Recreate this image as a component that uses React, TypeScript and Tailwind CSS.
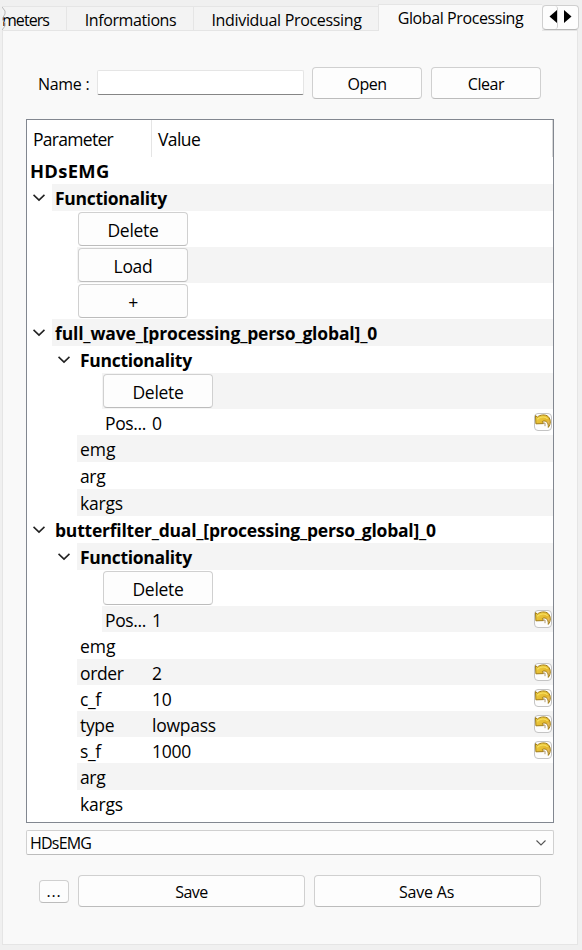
type RowData = {
  level: 0 | 1 | 2 | 3;
  label?: string;
  button?: string;
  value?: string;
  bold?: boolean;
  open?: boolean;
  shade?: boolean;
  undo?: boolean;
  h: string;
  track?: string;
};

const rows: RowData[] = [
  { level: 0, label: 'HDsEMG', bold: true, h: 'h-[27px]', track: 'tracking-[0.3px] text-[18.4px]' },
  { level: 1, label: 'Functionality', bold: true, open: true, shade: true, h: 'h-[27px]', track: 'tracking-[-0.3px]' },
  { level: 2, button: 'Delete', h: 'h-[36px]' },
  { level: 2, button: 'Load', shade: true, h: 'h-[36px]' },
  { level: 2, button: '+', h: 'h-[36px]' },
  { level: 1, label: 'full_wave_[processing_perso_global]_0', bold: true, open: true, shade: true, h: 'h-[27px]', track: 'tracking-[-0.15px]' },
  { level: 2, label: 'Functionality', bold: true, open: true, h: 'h-[27px]', track: 'tracking-[-0.3px]' },
  { level: 3, button: 'Delete', shade: true, h: 'h-[36px]' },
  { level: 3, label: 'Pos...', value: '0', undo: true, h: 'h-[26px]' },
  { level: 2, label: 'emg', shade: true, h: 'h-[27px]', track: 'tracking-[0px]' },
  { level: 2, label: 'arg', h: 'h-[27px]' },
  { level: 2, label: 'kargs', shade: true, h: 'h-[27px]', track: 'tracking-[-0.2px]' },
  { level: 1, label: 'butterfilter_dual_[processing_perso_global]_0', bold: true, open: true, h: 'h-[27px]', track: 'tracking-[-0.22px]' },
  { level: 2, label: 'Functionality', bold: true, open: true, shade: true, h: 'h-[27px]', track: 'tracking-[-0.3px]' },
  { level: 3, button: 'Delete', h: 'h-[36px]' },
  { level: 3, label: 'Pos...', value: '1', shade: true, undo: true, h: 'h-[26px]' },
  { level: 2, label: 'emg', h: 'h-[27px]', track: 'tracking-[0px]' },
  { level: 2, label: 'order', value: '2', shade: true, undo: true, h: 'h-[26px]' },
  { level: 2, label: 'c_f', value: '10', undo: true, h: 'h-[26px]' },
  { level: 2, label: 'type', value: 'lowpass', shade: true, undo: true, h: 'h-[26px]' },
  { level: 2, label: 's_f', value: '1000', undo: true, h: 'h-[26px]' },
  { level: 2, label: 'arg', shade: true, h: 'h-[27px]' },
  { level: 2, label: 'kargs', h: 'h-[27px]', track: 'tracking-[-0.2px]' },
];

const indent = { 0: 'w-0', 1: 'w-[25px]', 2: 'w-[50px]', 3: 'w-[75px]' };
const labelWidth = { 0: 'w-[122px]', 1: 'w-[97px]', 2: 'w-[72px]', 3: 'w-[47px]' };

function Chevron() {
  return (
    <svg className="mr-[7px] mt-px" width="12" height="8" viewBox="0 0 12 8" fill="none" stroke="#222" strokeWidth="1.7">
      <path d="M0.5 0.9L6 6L11.5 0.9" />
    </svg>
  );
}

function UndoButton() {
  return (
    <span className="mr-px -mt-px flex h-[18px] w-[18px] shrink-0 items-start justify-center rounded-[4px] border border-[#c4c4c4] bg-[#fdfdfd]">
      <svg width="16" height="16" viewBox="0 0 16 16">
        <defs>
          <linearGradient id="gold" x1="0" y1="0" x2="1" y2="1">
            <stop offset="0" stopColor="#f0d548" />
            <stop offset=".6" stopColor="#e3b52c" />
            <stop offset="1" stopColor="#f2c9a0" />
          </linearGradient>
        </defs>
        <path d="M0.5 1.6L2.4 3.1C5 0.6 10.5 0 13.2 2.6C16 5.4 16 10 13.3 13.4C13.4 10.6 12.9 8.6 11.2 7.6C10 6.8 8.6 6.8 7.4 7.5L8.6 9.6L0.9 9.8Z" fill="url(#gold)" stroke="#a17c14" strokeWidth="1" strokeLinejoin="round" />
        <path d="M2.2 5.2C5.4 2.6 10.4 2.2 12.6 4.8" fill="none" stroke="#f7e05f" strokeWidth="1.1" />
        <path d="M8 9.4L10 9L10 12.2" fill="none" stroke="#b09a74" strokeWidth="1" />
      </svg>
    </span>
  );
}

function Row({ r }: { r: RowData }) {
  return (
    <div className={`flex ${r.h}`}>
      <div className={`flex shrink-0 items-center justify-end ${indent[r.level]}`}>{r.open && <Chevron />}</div>
      <div className={`flex min-w-0 flex-1 items-center ${r.shade ? 'bg-[#f4f4f4]' : ''}`}>
        {r.button ? (
          <div className="ml-px flex h-[34px] w-[110px] items-center justify-center rounded-[4px] border border-[#d0d0d0] border-b-[#bcbcbc] bg-[#fdfdfd] pt-[3px] text-[17.5px] tracking-[-0.3px]">
            {r.button}
          </div>
        ) : (
          <div className={`shrink-0 whitespace-nowrap pl-[3px] pt-px leading-[24px] ${labelWidth[r.level]} ${r.level === 0 ? '' : 'text-[17.5px]'} ${r.bold ? 'font-bold' : ''} ${r.track ?? 'tracking-[-0.35px]'}`}>
            {r.label}
          </div>
        )}
        {r.value && <div className="flex-1 pl-[3px] pt-px text-[17.5px] leading-[24px] tracking-[-0.25px]">{r.value}</div>}
        {r.undo && <UndoButton />}
      </div>
    </div>
  );
}

const btn = 'flex items-center justify-center rounded-[4px] border border-[#d0d0d0] border-b-[#bcbcbc] bg-[#fdfdfd] text-[16px]';

export default function App() {
  return (
    <div className="flex h-[950px] w-[582px] flex-col overflow-hidden bg-[#f0f0f0] font-['Open_Sans','Noto_Sans',sans-serif] text-black">
      <div className="relative z-10 flex h-[31px] shrink-0 items-end pl-[2px] text-[16px] tracking-[-0.4px]">
        <div className="relative flex h-[25px] w-[65px] items-center border border-l-0 border-[#e5e5e5] bg-[#f3f3f3] pt-[3px]">
          <span className="whitespace-nowrap tracking-[-0.95px]">meters</span>
          <svg className="absolute left-0 top-0" width="5" height="23" viewBox="0 0 5 23" fill="none" stroke="#b8b8b8">
            <path d="M0 0L3 4V7L0 12L3 16V19L0 23" />
          </svg>
        </div>
        <div className="flex h-[25px] w-[127px] items-center justify-center border border-l-0 border-[#e5e5e5] bg-[#f3f3f3] pl-px pt-[3px]">Informations</div>
        <div className="flex h-[25px] w-[184px] items-center justify-center border border-x-0 border-[#e5e5e5] bg-[#f3f3f3] pl-px pt-[3px] tracking-[-0.33px]">Individual Processing</div>
        <div className="flex h-[27px] w-[164px] items-center justify-center border border-b-0 border-r-0 border-[#e5e5e5] bg-[#f9f9f9]">Global Processing</div>
        <div className="mb-px flex h-[25px] w-[37px] rounded-[4px] border border-[#cfcfcf] border-b-[#b8b8b8] bg-[#fdfdfd]">
          <div className="flex w-[15px] items-center justify-end rounded-r-[3px] border-r border-[#cfcfcf] pb-[2px]">
            <svg width="8" height="13" viewBox="0 0 8 13"><path d="M8 0V13L0.5 6.5Z" /></svg>
          </div>
          <div className="flex items-center pb-[2px] pl-[6px]">
            <svg width="8" height="13" viewBox="0 0 8 13"><path d="M0 0V13L7.5 6.5Z" /></svg>
          </div>
        </div>
      </div>

      <div className="-mt-px ml-[2px] flex h-[915px] w-[576px] shrink-0 flex-col border border-[#e5e5e5] bg-[#f9f9f9]">
        <div className="mt-[36px] flex h-[32px] items-center pl-[35px]">
          <span className="w-[59px] pt-[2px] text-[16px] tracking-[-0.3px]">Name :</span>
          <div className="-mt-px h-[25px] w-[207px] rounded-[2px] border border-[#e5e5e5] border-b-[#868686] bg-white" />
          <div className={`${btn} ml-[8px] h-[32px] w-[110px] pt-[2px] tracking-[-0.5px]`}>Open</div>
          <div className={`${btn} ml-[9px] h-[32px] w-[110px] pt-[2px] tracking-[-0.4px]`}>Clear</div>
        </div>

        <div className="ml-[23px] mt-[20px] h-[704px] w-[528px] shrink-0 border border-[#828790] bg-white">
          <div className="flex h-[37px] items-center text-[17.5px]">
            <div className="flex h-full w-[125px] items-center border-r border-[#e5e5e5] pl-[6px] pt-[2px] tracking-[-0.7px]">Parameter</div>
            <div className="flex h-full flex-1 items-center border-r border-[#d8d8d8] pl-[6px] pt-[2px] tracking-[-0.6px]">Value</div>
          </div>
          {rows.map((r, i) => <Row key={i} r={r} />)}
        </div>

        <div className="ml-[23px] mt-[7px] flex h-[25px] w-[528px] shrink-0 items-center justify-between rounded-[2px] border border-[#d0d0d0] border-b-[#bcbcbc] bg-[#fdfdfd] pl-[3px] pr-[7px] text-[16px] tracking-[-0.8px]">
          <span className="pt-px">HDsEMG</span>
          <svg width="10" height="6" viewBox="0 0 10 6" fill="none" stroke="#555" strokeWidth="1.1"><path d="M0.5 0.5L5 5L9.5 0.5" /></svg>
        </div>

        <div className="mt-[20px] flex h-[32px] items-center pl-[36px]">
          <div className={`${btn} h-[23px] w-[30px] tracking-[0.8px]`}>...</div>
          <div className={`${btn} ml-[9px] h-[32px] w-[227px] pt-[2px] tracking-[-0.5px]`}>Save</div>
          <div className={`${btn} ml-[9px] h-[32px] w-[227px] pr-[2px] pt-[2px] tracking-[-0.2px]`}>Save As</div>
        </div>
      </div>
    </div>
  );
}
